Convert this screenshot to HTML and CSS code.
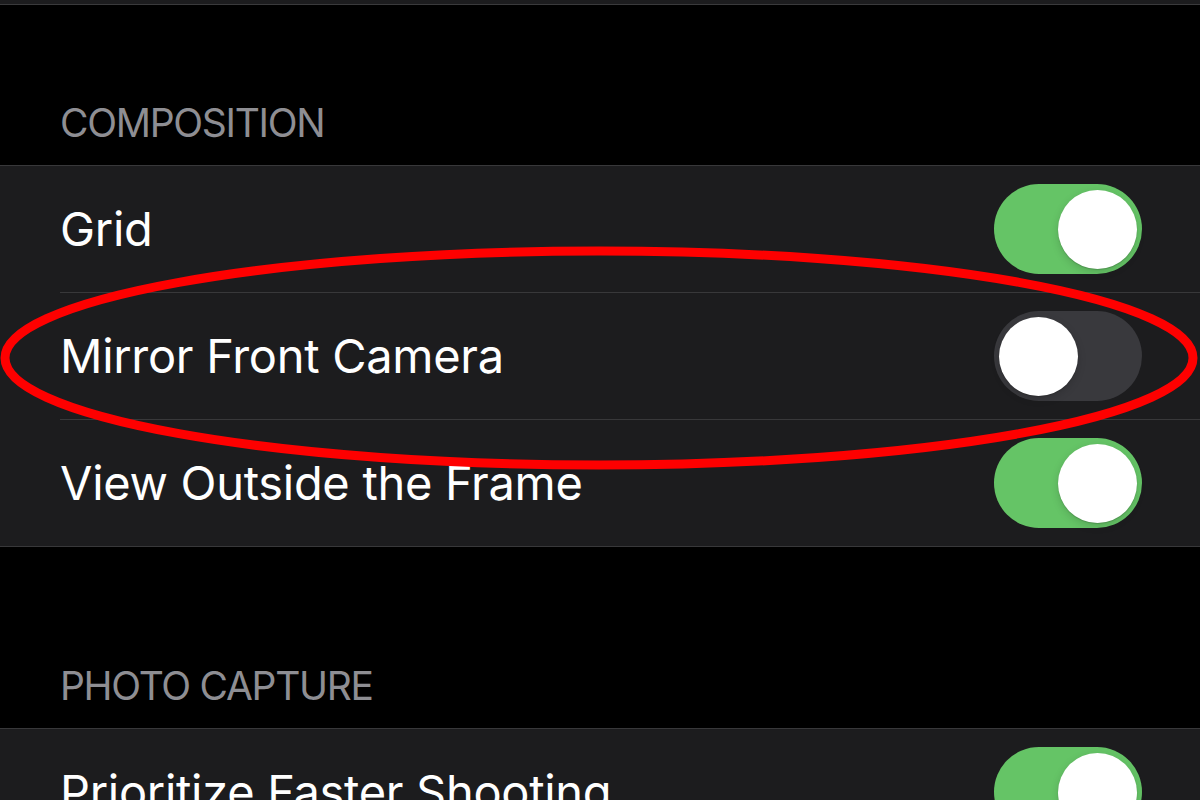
FILE: index.html
```html
<!DOCTYPE html>
<html lang="en">
<head>
<meta charset="utf-8">
<title>Camera Settings</title>
<link rel="stylesheet" href="styles.css">
</head>
<body>
<div class="screen">
  <div class="prev-group"></div>

  <div class="section-header first"><span>COMPOSITION</span></div>
  <div class="group">
    <div class="row">
      <span class="label">Grid</span>
      <span class="toggle on"><span class="knob"></span></span>
    </div>
    <div class="row">
      <span class="label">Mirror Front Camera</span>
      <span class="toggle"><span class="knob"></span></span>
    </div>
    <div class="row">
      <span class="label">View Outside the Frame</span>
      <span class="toggle on"><span class="knob"></span></span>
    </div>
  </div>

  <div class="section-header second"><span>PHOTO CAPTURE</span></div>
  <div class="group">
    <div class="row">
      <span class="label">Prioritize Faster Shooting</span>
      <span class="toggle on"><span class="knob"></span></span>
    </div>
  </div>

  <svg class="annotation" width="1200" height="800" viewBox="0 0 1200 800" aria-hidden="true">
    <ellipse cx="599" cy="358" rx="594" ry="107" fill="none" stroke="#fe0000" stroke-width="9"/>
  </svg>
</div>
</body>
</html>
```

FILE: styles.css
```css
* { box-sizing: border-box; }

html, body {
  margin: 0;
  padding: 0;
  background: #000;
}

body {
  font-family: Inter, "Noto Sans", "Liberation Sans", sans-serif;
  color: #fff;
}

.screen {
  position: relative;
  width: 1200px;
  height: 800px;
  overflow: hidden;
  background: #000;
}

.prev-group {
  height: 5px;
  background: #1c1c1e;
  border-bottom: 1px solid #3a3a3c;
}

.section-header {
  display: flex;
  align-items: flex-end;
  padding: 0 60px 22px;
  font-size: 39px;
  line-height: 40px;
  color: #8e8e93;
  letter-spacing: -1.3px;
}

.section-header.first { height: 160px; }
.section-header.second { height: 181px; }

.group {
  background: #1c1c1e;
  border-top: 1px solid #38383a;
  border-bottom: 1px solid #38383a;
}

.row {
  position: relative;
  display: flex;
  align-items: center;
  justify-content: space-between;
  height: 127px;
  padding: 0 58px 1px 60px;
}

.row + .row::before {
  content: "";
  position: absolute;
  left: 60px;
  right: 0;
  top: -1px;
  height: 1px;
  background: #38383a;
}

.row:last-child { height: 126px; padding-bottom: 0; }

.label {
  font-size: 47px;
  line-height: 1.2;
  letter-spacing: -0.3px;
}

.toggle {
  display: flex;
  align-items: center;
  width: 148px;
  height: 90px;
  padding: 0 5px;
  border-radius: 45px;
  background: #39393d;
  flex-shrink: 0;
}

.toggle.on {
  background: #65c466;
  justify-content: flex-end;
}

.knob {
  width: 79px;
  height: 79px;
  border-radius: 50%;
  background: #fff;
  box-shadow: 0 3px 8px rgba(0, 0, 0, 0.15), 0 1px 1px rgba(0, 0, 0, 0.16);
}

.annotation {
  position: absolute;
  top: 0;
  left: 0;
  pointer-events: none;
}
```
